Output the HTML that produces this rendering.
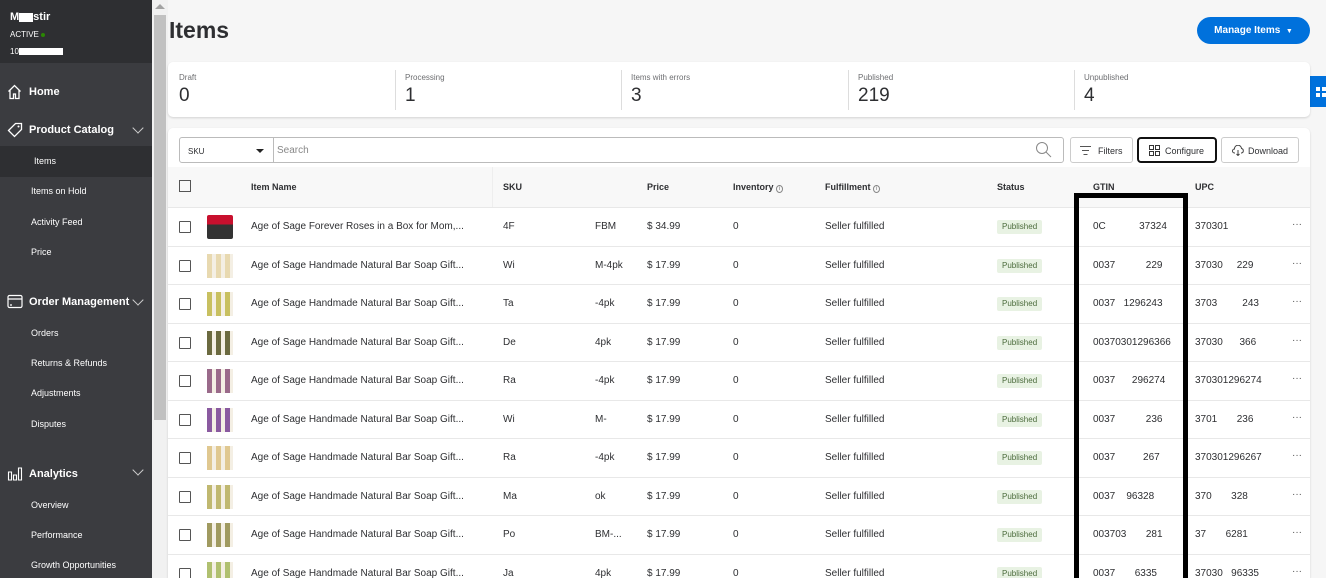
<!DOCTYPE html>
<html style="width:1326px;height:578px;overflow:hidden"><head><meta charset="utf-8"><style>
*{box-sizing:border-box;margin:0;padding:0}
body{width:1326px;height:578px;overflow:hidden;background:#f6f6f6;font-family:"Liberation Sans",sans-serif;color:#2e2f32;position:relative}
.a{position:absolute;white-space:nowrap}
#sb{position:absolute;left:0;top:0;width:152px;height:578px;background:#3b3c40;color:#fff}
#sbh{position:absolute;left:0;top:0;width:152px;height:63px;background:#2e2f32}
.nav{position:absolute;font-size:11px;font-weight:bold;color:#fff}
.sub{position:absolute;left:31px;font-size:9px;color:#fff}
.chev{position:absolute;left:134px;width:8px;height:8px;border-right:1.3px solid #ccc;border-bottom:1.3px solid #ccc;transform:rotate(45deg)}
#scroll{position:absolute;left:152px;top:0;width:16px;height:578px;background:#f1f1f1}
#thumb{position:absolute;left:154px;top:15px;width:12px;height:405px;background:#c1c1c1}
.card{position:absolute;background:#fff;border-radius:5px;box-shadow:0 1px 2px rgba(0,0,0,.15)}
.sl{position:absolute;top:11px;font-size:8px;color:#6d6e71}
.sv{position:absolute;top:23px;font-size:19px;color:#2e2f32}
.sd{position:absolute;top:8px;width:1px;height:40px;background:#ddd}
.btn{position:absolute;top:137px;height:26px;border:1px solid #ccc;border-radius:3px;background:#fff;font-size:9px;color:#2e2f32}
.th{position:absolute;top:182px;font-size:9px;font-weight:bold;color:#2e2f32}
.row{position:absolute;left:168px;width:1142px;height:38.5px;border-top:1px solid #e8e8e8;background:#fff}
.row span{position:absolute;top:13px;font-size:10px;color:#2e2f32;white-space:nowrap}
.cb{position:absolute;left:11px;top:13px;width:12px;height:12px;border:1.2px solid #555;border-radius:1px}
.img{position:absolute;left:39px;top:7px;width:26px;height:24px}
.pub{position:absolute;left:829px;top:12px;height:14px;padding:0 5px;background:#e8f2e3;color:#4b6b3c;font-size:8px;line-height:14px;border-radius:2px}
.row .dots{position:absolute;left:1124px;top:11px;font-size:10px;color:#555}
</style></head><body>
<div id="sb"><div id="sbh"></div>
<div class="a" style="left:10px;top:11px;font-size:11px;font-weight:bold;color:#fff">M<span style="background:#fff;display:inline-block;width:14px;height:9px;vertical-align:middle"></span>stir</div>
<div class="a" style="left:10px;top:30px;font-size:8px;color:#fff">ACTIVE <span style="display:inline-block;width:4px;height:4px;border-radius:50%;background:#2a8703;vertical-align:middle"></span></div>
<div class="a" style="left:10px;top:47px;font-size:8px;color:#fff">10<span style="display:inline-block;width:44px;height:7px;background:#fff;vertical-align:middle"></span></div>
<svg class="a" style="left:7px;top:84px" width="15" height="16" viewBox="0 0 15 16"><path d="M1.5 7.5L7.5 1.5L13.5 7.5M3 6v8.5h3.5v-4.5h2v4.5h3.5V6" fill="none" stroke="#fff" stroke-width="1.3"/></svg>
<div class="nav" style="left:29px;top:86px">Home</div>
<svg class="a" style="left:7px;top:122px" width="16" height="16" viewBox="0 0 16 16"><path d="M1.5 8.5L8.5 1.5h6v6L7.5 14.5z" fill="none" stroke="#fff" stroke-width="1.3"/><circle cx="11.5" cy="4.5" r="1" fill="#fff"/></svg>
<div class="nav" style="left:29px;top:124px">Product Catalog</div><div class="chev" style="top:124px"></div>
<div style="position:absolute;left:0;top:146px;width:152px;height:31px;background:#2e2f32"></div>
<div class="sub" style="left:34px;top:156px">Items</div>
<div class="sub" style="top:186px">Items on Hold</div>
<div class="sub" style="top:217px">Activity Feed</div>
<div class="sub" style="top:247px">Price</div>
<svg class="a" style="left:7px;top:294px" width="16" height="15" viewBox="0 0 16 15"><rect x="1" y="1.5" width="14" height="12" rx="1.5" fill="none" stroke="#fff" stroke-width="1.2"/><path d="M1 5h14M3 11h2" stroke="#fff" stroke-width="1.2"/></svg>
<div class="nav" style="left:29px;top:296px">Order Management</div><div class="chev" style="top:296px"></div>
<div class="sub" style="top:328px">Orders</div>
<div class="sub" style="top:358px">Returns &amp; Refunds</div>
<div class="sub" style="top:388px">Adjustments</div>
<div class="sub" style="top:419px">Disputes</div>
<svg class="a" style="left:7px;top:467px" width="16" height="14" viewBox="0 0 16 14"><path d="M1.5 5h3v8h-3zM6.5 8h3v5h-3zM11.5 1h3v12h-3z" fill="none" stroke="#fff" stroke-width="1.1"/></svg>
<div class="nav" style="left:29px;top:468px">Analytics</div><div class="chev" style="top:466px"></div>
<div class="sub" style="top:500px">Overview</div>
<div class="sub" style="top:530px">Performance</div>
<div class="sub" style="top:560px">Growth Opportunities</div>
</div>
<div id="scroll"></div><div id="thumb"></div>
<div class="a" style="left:155px;top:4px;width:0;height:0;border-left:5px solid transparent;border-right:5px solid transparent;border-bottom:5px solid #a3a3a3"></div>

<div class="a" style="left:169px;top:17px;font-size:23px;font-weight:bold;color:#2e2f32">Items</div>
<div class="a" style="left:1197px;top:17px;width:113px;height:27px;border-radius:14px;background:#0071dc;color:#fff;font-size:10px;font-weight:bold;line-height:27px;text-align:center">Manage Items&nbsp;&nbsp;<span style="font-size:7px">▼</span></div>
<div class="a" style="left:1306px;top:76px;width:20px;height:31px;background:#0071dc;border-radius:4px 0 0 4px"></div>
<div class="a" style="left:1316px;top:87px;width:4px;height:4px;background:#fff;box-shadow:6px 0 #fff,0 6px #fff,6px 6px #fff"></div>

<div class="card" style="left:168px;top:62px;width:1142px;height:55px">
<div class="sl" style="left:11px">Draft</div><div class="sv" style="left:11px">0</div>
<div class="sd" style="left:227px"></div>
<div class="sl" style="left:237px">Processing</div><div class="sv" style="left:237px">1</div>
<div class="sd" style="left:453px"></div>
<div class="sl" style="left:463px">Items with errors</div><div class="sv" style="left:463px">3</div>
<div class="sd" style="left:680px"></div>
<div class="sl" style="left:690px">Published</div><div class="sv" style="left:690px">219</div>
<div class="sd" style="left:906px"></div>
<div class="sl" style="left:916px">Unpublished</div><div class="sv" style="left:916px">4</div>
</div>

<div class="card" style="left:168px;top:128px;width:1142px;height:450px;border-radius:5px 5px 0 0"></div>
<div class="a" style="left:179px;top:137px;width:885px;height:26px;border:1px solid #bbb;border-radius:3px;background:#fff"></div>
<div class="a" style="left:273px;top:137px;width:1px;height:26px;background:#bbb"></div>
<div class="a" style="left:188px;top:147px;font-size:8px">SKU</div>
<div class="a" style="left:256px;top:149px;width:0;height:0;border-left:4px solid transparent;border-right:4px solid transparent;border-top:4px solid #222"></div>
<div class="a" style="left:277px;top:145px;font-size:10px;color:#888">Search</div>
<svg class="a" style="left:1035px;top:141px" width="17" height="17" viewBox="0 0 17 17"><circle cx="7" cy="7" r="5.5" fill="none" stroke="#888" stroke-width="1"/><path d="M11 11l5 5" stroke="#888" stroke-width="1"/></svg>
<div class="btn" style="left:1070px;width:63px"><svg class="a" style="left:9px;top:8px" width="11" height="9" viewBox="0 0 11 9"><path d="M0 .5h11M2 4.5h7M3.5 8.5h4" stroke="#555" stroke-width="1"/></svg><span class="a" style="left:27px;top:8px">Filters</span></div>
<div class="btn" style="left:1137px;width:80px;border:2px solid #111;border-radius:4px"><svg class="a" style="left:10px;top:6px" width="11" height="11" viewBox="0 0 11 11"><rect x=".5" y=".5" width="4" height="4" fill="none" stroke="#333"/><rect x="6.5" y=".5" width="4" height="4" fill="none" stroke="#333"/><rect x=".5" y="6.5" width="4" height="4" fill="none" stroke="#333"/><rect x="6.5" y="6.5" width="4" height="4" fill="none" stroke="#333"/></svg><span class="a" style="left:26px;top:7px">Configure</span></div>
<div class="btn" style="left:1221px;width:78px"><svg class="a" style="left:10px;top:7px" width="12" height="11" viewBox="0 0 12 11"><path d="M3 8H2.5A2 2 0 0 1 2.5 4 3.5 3.5 0 0 1 9.5 3.5 2.3 2.3 0 0 1 9.5 8H9M6 5v5.5M4.5 9l1.5 1.5L7.5 9" fill="none" stroke="#444" stroke-width="1"/></svg><span class="a" style="left:26px;top:8px">Download</span></div>

<div class="a" style="left:168px;top:167px;width:1142px;height:40px;background:#f8f8f8"></div>
<div class="a" style="left:492px;top:167px;width:1px;height:40px;background:#eee"></div>
<div class="a" style="left:179px;top:180px;width:12px;height:12px;border:1.2px solid #555"></div>
<div class="th" style="left:251px">Item Name</div>
<div class="th" style="left:503px">SKU</div>
<div class="th" style="left:647px">Price</div>
<div class="th" style="left:733px">Inventory <span style="font-weight:normal;border:1px solid #888;border-radius:50%;font-size:6px;padding:0 2px;color:#777">i</span></div>
<div class="th" style="left:825px">Fulfillment <span style="font-weight:normal;border:1px solid #888;border-radius:50%;font-size:6px;padding:0 2px;color:#777">i</span></div>
<div class="th" style="left:997px">Status</div>
<div class="th" style="left:1093px">GTIN</div>
<div class="th" style="left:1195px">UPC</div>

<div class="row" style="top:207px"><div class="cb"></div><div class="img" style="background:linear-gradient(#c8102e 0 40%,#333 40%);border-radius:2px"></div><span style="left:83px">Age of Sage Forever Roses in a Box for Mom,...</span><span style="left:335px">4F</span><span style="left:427px">FBM</span><span style="left:479px">$ 34.99</span><span style="left:565px">0</span><span style="left:657px">Seller fulfilled</span><div class="pub">Published</div><span style="left:925px">0C&nbsp;&nbsp;&nbsp;&nbsp;&nbsp;&nbsp;&nbsp;&nbsp;&nbsp;&nbsp;&nbsp;&nbsp;37324</span><span style="left:1027px">370301</span><span class="dots">···</span></div>
<div class="row" style="top:245.5px"><div class="cb"></div><div class="img" style="background:repeating-linear-gradient(90deg,#e8d9b0 0 5px,#f4efe4 5px 9px)"></div><span style="left:83px">Age of Sage Handmade Natural Bar Soap Gift...</span><span style="left:335px">Wi</span><span style="left:427px">M-4pk</span><span style="left:479px">$ 17.99</span><span style="left:565px">0</span><span style="left:657px">Seller fulfilled</span><div class="pub">Published</div><span style="left:925px">0037&nbsp;&nbsp;&nbsp;&nbsp;&nbsp;&nbsp;&nbsp;&nbsp;&nbsp;&nbsp;&nbsp;229</span><span style="left:1027px">37030&nbsp;&nbsp;&nbsp;&nbsp;&nbsp;229</span><span class="dots">···</span></div>
<div class="row" style="top:284px"><div class="cb"></div><div class="img" style="background:repeating-linear-gradient(90deg,#c8c060 0 5px,#f4efe4 5px 9px)"></div><span style="left:83px">Age of Sage Handmade Natural Bar Soap Gift...</span><span style="left:335px">Ta</span><span style="left:427px">-4pk</span><span style="left:479px">$ 17.99</span><span style="left:565px">0</span><span style="left:657px">Seller fulfilled</span><div class="pub">Published</div><span style="left:925px">0037&nbsp;&nbsp;&nbsp;1296243</span><span style="left:1027px">3703&nbsp;&nbsp;&nbsp;&nbsp;&nbsp;&nbsp;&nbsp;&nbsp;&nbsp;243</span><span class="dots">···</span></div>
<div class="row" style="top:322.5px"><div class="cb"></div><div class="img" style="background:repeating-linear-gradient(90deg,#6b6a40 0 5px,#f4efe4 5px 9px)"></div><span style="left:83px">Age of Sage Handmade Natural Bar Soap Gift...</span><span style="left:335px">De</span><span style="left:427px">4pk</span><span style="left:479px">$ 17.99</span><span style="left:565px">0</span><span style="left:657px">Seller fulfilled</span><div class="pub">Published</div><span style="left:925px">00370301296366</span><span style="left:1027px">37030&nbsp;&nbsp;&nbsp;&nbsp;&nbsp;&nbsp;366</span><span class="dots">···</span></div>
<div class="row" style="top:361px"><div class="cb"></div><div class="img" style="background:repeating-linear-gradient(90deg,#9a6a8a 0 5px,#f4efe4 5px 9px)"></div><span style="left:83px">Age of Sage Handmade Natural Bar Soap Gift...</span><span style="left:335px">Ra</span><span style="left:427px">-4pk</span><span style="left:479px">$ 17.99</span><span style="left:565px">0</span><span style="left:657px">Seller fulfilled</span><div class="pub">Published</div><span style="left:925px">0037&nbsp;&nbsp;&nbsp;&nbsp;&nbsp;&nbsp;296274</span><span style="left:1027px">370301296274</span><span class="dots">···</span></div>
<div class="row" style="top:399.5px"><div class="cb"></div><div class="img" style="background:repeating-linear-gradient(90deg,#8a5aa0 0 5px,#f4efe4 5px 9px)"></div><span style="left:83px">Age of Sage Handmade Natural Bar Soap Gift...</span><span style="left:335px">Wi</span><span style="left:427px">M-</span><span style="left:479px">$ 17.99</span><span style="left:565px">0</span><span style="left:657px">Seller fulfilled</span><div class="pub">Published</div><span style="left:925px">0037&nbsp;&nbsp;&nbsp;&nbsp;&nbsp;&nbsp;&nbsp;&nbsp;&nbsp;&nbsp;&nbsp;236</span><span style="left:1027px">3701&nbsp;&nbsp;&nbsp;&nbsp;&nbsp;&nbsp;&nbsp;236</span><span class="dots">···</span></div>
<div class="row" style="top:438px"><div class="cb"></div><div class="img" style="background:repeating-linear-gradient(90deg,#e0c890 0 5px,#f4efe4 5px 9px)"></div><span style="left:83px">Age of Sage Handmade Natural Bar Soap Gift...</span><span style="left:335px">Ra</span><span style="left:427px">-4pk</span><span style="left:479px">$ 17.99</span><span style="left:565px">0</span><span style="left:657px">Seller fulfilled</span><div class="pub">Published</div><span style="left:925px">0037&nbsp;&nbsp;&nbsp;&nbsp;&nbsp;&nbsp;&nbsp;&nbsp;&nbsp;&nbsp;267</span><span style="left:1027px">370301296267</span><span class="dots">···</span></div>
<div class="row" style="top:476.5px"><div class="cb"></div><div class="img" style="background:repeating-linear-gradient(90deg,#c0b870 0 5px,#f4efe4 5px 9px)"></div><span style="left:83px">Age of Sage Handmade Natural Bar Soap Gift...</span><span style="left:335px">Ma</span><span style="left:427px">ok</span><span style="left:479px">$ 17.99</span><span style="left:565px">0</span><span style="left:657px">Seller fulfilled</span><div class="pub">Published</div><span style="left:925px">0037&nbsp;&nbsp;&nbsp;&nbsp;96328</span><span style="left:1027px">370&nbsp;&nbsp;&nbsp;&nbsp;&nbsp;&nbsp;&nbsp;328</span><span class="dots">···</span></div>
<div class="row" style="top:515px"><div class="cb"></div><div class="img" style="background:repeating-linear-gradient(90deg,#a09a60 0 5px,#f4efe4 5px 9px)"></div><span style="left:83px">Age of Sage Handmade Natural Bar Soap Gift...</span><span style="left:335px">Po</span><span style="left:427px">BM-...</span><span style="left:479px">$ 17.99</span><span style="left:565px">0</span><span style="left:657px">Seller fulfilled</span><div class="pub">Published</div><span style="left:925px">003703&nbsp;&nbsp;&nbsp;&nbsp;&nbsp;&nbsp;&nbsp;281</span><span style="left:1027px">37&nbsp;&nbsp;&nbsp;&nbsp;&nbsp;&nbsp;&nbsp;6281</span><span class="dots">···</span></div>
<div class="row" style="top:553.5px;height:24.5px;overflow:hidden"><div class="cb"></div><div class="img" style="background:repeating-linear-gradient(90deg,#b0c070 0 5px,#f4efe4 5px 9px)"></div><span style="left:83px">Age of Sage Handmade Natural Bar Soap Gift...</span><span style="left:335px">Ja</span><span style="left:427px">4pk</span><span style="left:479px">$ 17.99</span><span style="left:565px">0</span><span style="left:657px">Seller fulfilled</span><div class="pub">Published</div><span style="left:925px">0037&nbsp;&nbsp;&nbsp;&nbsp;&nbsp;&nbsp;&nbsp;6335</span><span style="left:1027px">37030&nbsp;&nbsp;&nbsp;96335</span><span class="dots">···</span></div>

<div class="a" style="left:1074px;top:193px;width:114px;height:385px;border:5px solid #000;border-bottom:none"></div>
</body></html>
